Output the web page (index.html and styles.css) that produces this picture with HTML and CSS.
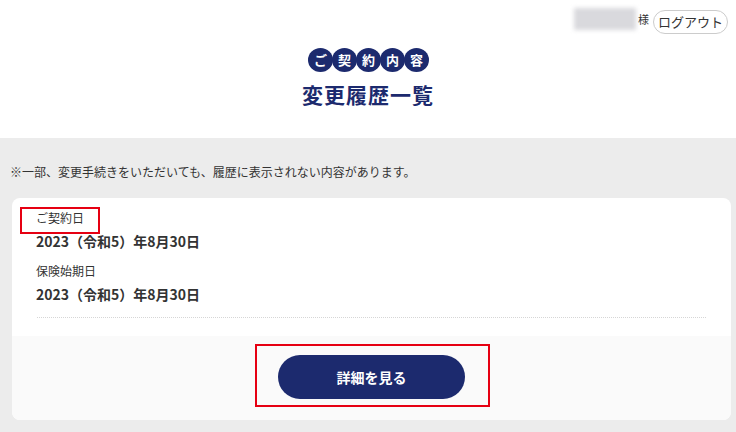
FILE: index.html
```html
<!DOCTYPE html>
<html lang="ja">

<head>
    <meta charset="UTF-8">
    <title>変更履歴一覧</title>
    <link rel="stylesheet" href="styles.css">
</head>

<body>
    <header class="cabecera">
        <div class="usuario">
            <span class="nombre"></span>
            <span class="sama">様</span>
            <button class="logout">ログアウト</button>
        </div>
        <div class="insignia">
            <span>ご</span><span>契</span><span>約</span><span>内</span><span>容</span>
        </div>
        <h1>変更履歴一覧</h1>
    </header>

    <main class="contenido">
        <p class="aviso">※一部、変更手続きをいただいても、履歴に表示されない内容があります。</p>

        <div class="tarjeta">
            <div class="datos">
                <div class="etiqueta marcado">ご契約日</div>
                <div class="valor">2023（令和5）年8月30日</div>
                <div class="etiqueta segunda">保険始期日</div>
                <div class="valor">2023（令和5）年8月30日</div>
                <hr class="punteado">
            </div>
            <div class="acciones">
                <button class="detalle">詳細を見る</button>
            </div>
        </div>
    </main>
</body>

</html>
```

FILE: styles.css
```css
body {
    margin: 0;
    font-family: "Noto Sans CJK JP", "Noto Sans", sans-serif;
    color: #333;
    background-color: #ececec;
}

.cabecera {
    background-color: white;
    height: 138px;
    box-sizing: border-box;
    padding-top: 7px;
    display: flex;
    flex-direction: column;
    align-items: center;
}

.usuario {
    align-self: flex-end;
    display: flex;
    align-items: center;
    margin-right: 8px;
    height: 24px;
}

.nombre {
    width: 62px;
    height: 22px;
    background-color: #d9d9dd;
    filter: blur(2px);
}

.sama {
    font-size: 11px;
    margin-left: 2px;
    margin-right: 4px;
}

.logout {
    font-family: inherit;
    font-size: 13px;
    color: #333;
    background: white;
    border: 1px solid #ccc;
    border-radius: 12px;
    height: 24px;
    padding: 0 4px;
    line-height: 20px;
    margin-top: 5px;
}

.insignia {
    display: flex;
    margin-top: 17px;
}

.insignia span {
    width: 25px;
    height: 24px;
    border-radius: 50%;
    background-color: #1c2a6e;
    color: white;
    font-size: 13px;
    font-weight: bold;
    line-height: 24px;
    text-align: center;
    margin-right: -1px;
}

.cabecera h1 {
    font-size: 21px;
    font-weight: bold;
    color: #1c2a6e;
    margin: 8px 0 0 0;
    line-height: 28px;
    letter-spacing: 1px;
}

.contenido {
    padding: 25px 5px 13px 12px;
}

.aviso {
    font-size: 12px;
    line-height: 18px;
    margin: 0 0 17px -2px;
}

.tarjeta {
    background-color: white;
    border-radius: 8px;
    overflow: hidden;
}

.datos {
    padding: 11px 25px 18px 24px;
}

.etiqueta {
    font-size: 12px;
    line-height: 18px;
}

.etiqueta.segunda {
    margin-top: 11px;
}

.marcado {
    position: relative;
    width: fit-content;
}

.marcado::after {
    content: "";
    position: absolute;
    left: -16px;
    right: -16px;
    top: -2px;
    bottom: -7px;
    border: 2px solid #e60012;
}

.valor {
    font-size: 14px;
    font-weight: bold;
    line-height: 20px;
    margin-top: 4px;
}

.punteado {
    border: none;
    border-top: 1px dotted #d6d6d6;
    margin: 13px 0 0 1px;
}

.acciones {
    background-color: #fafafa;
    padding: 19px 0 21px;
    display: flex;
    justify-content: center;
}

.detalle {
    position: relative;
    width: 187px;
    height: 44px;
    border: none;
    border-radius: 22px;
    background-color: #1c2a6e;
    color: white;
    font-family: inherit;
    font-size: 14px;
    font-weight: bold;
}

.detalle::after {
    content: "";
    position: absolute;
    left: -23px;
    right: -25px;
    top: -11px;
    bottom: -8px;
    border: 2px solid #e60012;
}
```
